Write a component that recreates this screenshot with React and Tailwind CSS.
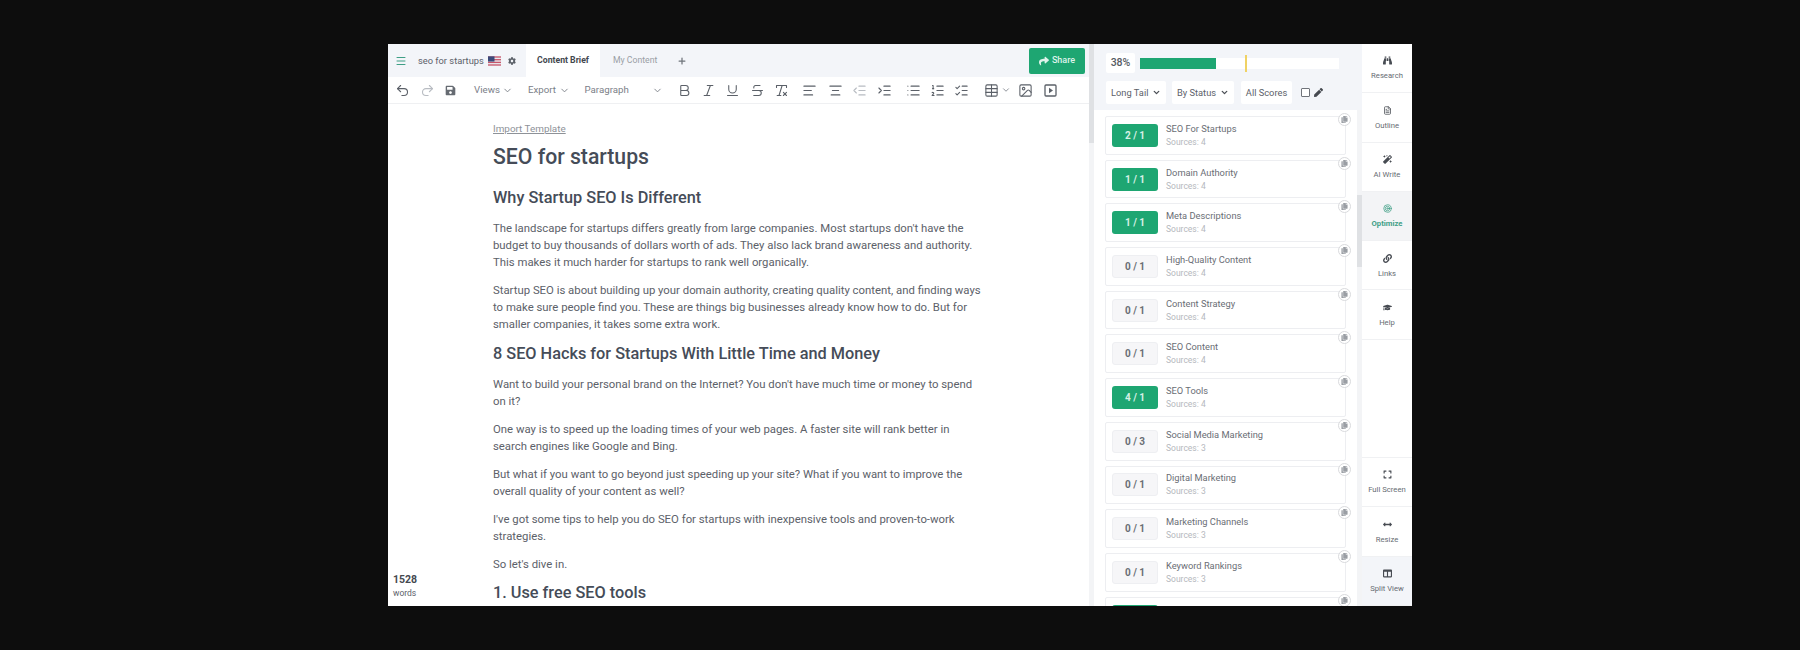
import React from 'react';
import {
  Undo2, Redo2, ChevronDown, Bold, Italic, Underline, Strikethrough, RemoveFormatting,
  AlignLeft, AlignCenter, IndentDecrease, IndentIncrease, List, ListOrdered, ListChecks,
  Table, Image, Menu, Plus, FileText, Target,
} from 'lucide-react';
import {
  FaBinoculars, FaCog, FaSave, FaShare, FaMagic, FaLink, FaGraduationCap, FaExpand,
  FaArrowsAltH, FaColumns, FaCopy, FaPen,
} from 'react-icons/fa';

const keywords = [
  { name: 'SEO For Startups', score: '2 / 1', sources: 4, done: true },
  { name: 'Domain Authority', score: '1 / 1', sources: 4, done: true },
  { name: 'Meta Descriptions', score: '1 / 1', sources: 4, done: true },
  { name: 'High-Quality Content', score: '0 / 1', sources: 4 },
  { name: 'Content Strategy', score: '0 / 1', sources: 4 },
  { name: 'SEO Content', score: '0 / 1', sources: 4 },
  { name: 'SEO Tools', score: '4 / 1', sources: 4, done: true },
  { name: 'Social Media Marketing', score: '0 / 3', sources: 3 },
  { name: 'Digital Marketing', score: '0 / 1', sources: 3 },
  { name: 'Marketing Channels', score: '0 / 1', sources: 3 },
  { name: 'Keyword Rankings', score: '0 / 1', sources: 3 },
];

const UsFlag = () => (
  <svg width="13" height="10" viewBox="0 0 14 10">
    <rect width="14" height="10" fill="#e9e9ee" />
    <rect y="0" width="14" height="1.4" fill="#c8566b" />
    <rect y="2.9" width="14" height="1.4" fill="#c8566b" />
    <rect y="5.8" width="14" height="1.4" fill="#c8566b" />
    <rect y="8.6" width="14" height="1.4" fill="#c8566b" />
    <rect width="7" height="5.6" fill="#3b4a7a" />
  </svg>
);

// video button in the toolbar, lucide's square-play has an outline triangle
const VideoIcon = ({ className }) => (
  <svg width="15" height="15" viewBox="0 0 15 15" className={className}>
    <rect x="2" y="2" width="11" height="11" rx="1" fill="none" stroke="#5b6068" strokeWidth="1.3" />
    <path d="M6 4.8 L10 7.5 L6 10.2 Z" fill="#5b6068" />
  </svg>
);

const ToolIcon = ({ icon: Icon, light, className = '' }) => (
  <Icon size={15} strokeWidth={1.7} className={`shrink-0 ${light ? 'text-[#b8bcc2]' : 'text-[#5b6068]'} ${className}`} />
);

const Toolbar = () => (
  <div className="flex h-[27px] items-center border-b border-[#eff0f2] pl-[7px] text-[9.7px] text-[#7b8088]">
    <ToolIcon icon={Undo2} />
    <ToolIcon icon={Redo2} light className="ml-[10px]" />
    <FaSave size={11} className="ml-[10px] text-[#666b72]" />
    <span className="ml-[18px] w-[26px]">Views</span>
    <ChevronDown size={11} className="ml-[2px]" />
    <span className="ml-[15px] w-[28px]">Export</span>
    <ChevronDown size={11} className="ml-[3px]" />
    <span className="ml-[14.5px] w-[45px]">Paragraph</span>
    <ChevronDown size={11} className="ml-[22px]" />
    <ToolIcon icon={Bold} className="ml-[14px]" />
    <ToolIcon icon={Italic} className="ml-[9px]" />
    <ToolIcon icon={Underline} className="ml-[9.5px]" />
    <ToolIcon icon={Strikethrough} className="ml-[9.5px]" />
    <ToolIcon icon={RemoveFormatting} className="ml-[9.5px]" />
    <ToolIcon icon={AlignLeft} className="ml-[13px]" />
    <ToolIcon icon={AlignCenter} className="ml-[10.5px]" />
    <ToolIcon icon={IndentDecrease} light className="ml-[9.5px]" />
    <ToolIcon icon={IndentIncrease} className="ml-[10px]" />
    <ToolIcon icon={List} className="ml-[14px]" />
    <ToolIcon icon={ListOrdered} className="ml-[9px]" />
    <ToolIcon icon={ListChecks} className="ml-[9px]" />
    <ToolIcon icon={Table} className="ml-[15px]" />
    <ChevronDown size={10} className="ml-[2px]" />
    <ToolIcon icon={Image} className="ml-[7px]" />
    <VideoIcon className="ml-[9.5px] shrink-0" />
  </div>
);

const TopBar = () => (
  <div className="flex h-[33px] items-center bg-[#f3f5f9] pl-[7px] pr-[4px]">
    <Menu size={12} className="text-[#3f9f86]" />
    <span className="ml-[11px] w-[65px] whitespace-nowrap text-[9.3px] text-[#5c6169]">seo for startups</span>
    <span className="ml-[5px]"><UsFlag /></span>
    <FaCog size={8} className="ml-[7px] text-[#5c6169]" />
    <div className="ml-[10px] flex h-full w-[74px] items-center justify-center bg-white text-[8.7px] font-bold text-[#43474e]">
      Content Brief
    </div>
    <span className="ml-[13px] w-[44px] whitespace-nowrap text-[8.7px] text-[#9a9ea5]">My Content</span>
    <Plus size={10} strokeWidth={3} className="ml-[20px] text-[#6f747b]" />
    <button className="ml-auto flex h-[26px] w-[56px] items-center justify-center gap-[3px] rounded-[2px] bg-[#1ea672] text-[9px] font-medium text-[#dff3ea]">
      <FaShare size={10} />
      Share
    </button>
  </div>
);

const Article = () => (
  <div className="h-[502px] overflow-hidden pl-[105px] pt-[16px] text-[11.35px] leading-[17px] text-[#5c6169]">
    <div className="w-[492px]">
      <a className="text-[9.9px] leading-[15px] text-[#8e9298] underline">Import Template</a>
      <h1 className="mt-[7px] text-[21.2px] leading-[26px] font-medium text-[#454c58]">SEO for startups</h1>
      <h2 className="mt-[17px] text-[16.3px] leading-[22px] font-medium text-[#454c58]">Why Startup SEO Is Different</h2>
      <p className="mt-[11px]">The landscape for startups differs greatly from large companies. Most startups don't have the budget to buy thousands of dollars worth of ads. They also lack brand awareness and authority. This makes it much harder for startups to rank well organically.</p>
      <p className="mt-[11px]">Startup SEO is about building up your domain authority, creating quality content, and finding ways to make sure people find you. These are things big businesses already know how to do. But for smaller companies, it takes some extra work.</p>
      <h2 className="mt-[10px] text-[16.3px] leading-[22px] font-medium text-[#454c58]">8 SEO Hacks for Startups With Little Time and Money</h2>
      <p className="mt-[11px]">Want to build your personal brand on the Internet? You don't have much time or money to spend on it?</p>
      <p className="mt-[11px]">One way is to speed up the loading times of your web pages. A faster site will rank better in search engines like Google and Bing.</p>
      <p className="mt-[11px]">But what if you want to go beyond just speeding up your site? What if you want to improve the overall quality of your content as well?</p>
      <p className="mt-[11px]">I've got some tips to help you do SEO for startups with inexpensive tools and proven-to-work strategies.</p>
      <p className="mt-[11px]">So let's dive in.</p>
      <h2 className="mt-[9px] text-[16.3px] leading-[22px] font-medium text-[#454c58]">1. Use free SEO tools</h2>
    </div>
  </div>
);

const Select = ({ label, width }) => (
  <div className={`flex h-[23px] items-center justify-between whitespace-nowrap rounded-[2px] bg-white px-[5px] text-[9.3px] text-[#5c6169] ${width}`}>
    {label}
    <ChevronDown size={9} strokeWidth={3.5} className="shrink-0 text-[#4a4e55]" />
  </div>
);

const ScorePanel = () => (
  <div className="h-[66px] bg-[#f3f5f9] pl-[12px] pt-[9px]">
    <div className="flex items-center">
      <div className="flex h-[20px] w-[29px] items-center justify-center rounded-[2px] bg-white text-[10.5px] font-medium text-[#555a62]">38%</div>
      <div className="relative ml-[5px] h-[11px] w-[199px] bg-white">
        <div className="h-full w-[76px] bg-[#1ea672]" />
        <div className="absolute left-[105px] top-[-3px] h-[17px] w-[2px] bg-[#f0d264]" />
      </div>
    </div>
    <div className="mt-[8px] flex items-center">
      <Select label="Long Tail" width="w-[60px]" />
      <div className="ml-[6px]"><Select label="By Status" width="w-[62px]" /></div>
      <div className="ml-[7px] flex h-[23px] w-[51px] items-center justify-center rounded-[2px] bg-white text-[9.3px] text-[#5c6169]">All Scores</div>
      <div className="ml-[9px] h-[9px] w-[9px] rounded-[1px] border border-[#70747b] bg-white" />
      <FaPen size={9} className="ml-[4px] text-[#454950]" />
    </div>
  </div>
);

const CopyBadge = () => (
  <div className="absolute -right-[6px] -top-[4px] flex h-[13px] w-[13px] items-center justify-center rounded-full border border-[#d9dadd] bg-white">
    <FaCopy size={7} className="text-[#9a9ea4]" />
  </div>
);

const KeywordCard = ({ name, score, sources, done }) => (
  <div className="relative mb-[5px] h-[38.7px] w-[241px] shrink-0 rounded-[2px] border border-[#edeef1] bg-white">
    <div className="flex h-full items-center pl-[6px]">
      <div className={`flex h-[23px] w-[46px] items-center justify-center rounded-[3px] text-[10px] font-bold ${done ? 'bg-[#1ea672] text-[#d7f0e6]' : 'border border-[#eeeff2] bg-[#f6f6f8] text-[#6a6e75]'}`}>
        {score}
      </div>
      <div className="ml-[8px] -mt-[1px]">
        <div className="text-[9.3px] leading-[14px] text-[#6a6e75]">{name}</div>
        <div className="text-[8.5px] leading-[12px] text-[#b5b8bd]">Sources: {sources}</div>
      </div>
    </div>
    <CopyBadge />
  </div>
);

const NavItem = ({ icon: Icon, label, active, tinted, size = 9 }) => (
  <div className={`flex h-[49.3px] flex-col items-center justify-center gap-[5px] border-b border-[#f0f1f3] pt-[2px] text-[7.7px] ${active ? 'bg-[#f3f4f6] font-bold text-[#3f9f86]' : tinted ? 'bg-[#f3f5f9] text-[#666b72]' : 'text-[#666b72]'}`}>
    <Icon size={size} className={active ? 'text-[#3f9f86]' : 'text-[#474b52]'} />
    {label}
  </div>
);

const SideNav = () => (
  <div className="flex w-[50px] flex-col bg-white">
    <NavItem icon={FaBinoculars} label="Research" />
    <NavItem icon={FileText} label="Outline" />
    <NavItem icon={FaMagic} label="AI Write" />
    <NavItem icon={Target} label="Optimize" active />
    <NavItem icon={FaLink} label="Links" />
    <NavItem icon={FaGraduationCap} label="Help" />
    <div className="flex-1 border-b border-[#f0f1f3]" />
    <NavItem icon={FaExpand} label="Full Screen" />
    <NavItem icon={FaArrowsAltH} label="Resize" />
    <NavItem icon={FaColumns} label="Split View" tinted />
  </div>
);

export default function App() {
  return (
    <div className="h-[650px] w-[1800px] bg-[#0d0d0d] pl-[388px] pt-[44px] font-['Roboto',sans-serif]">
      <div className="relative flex h-[562px] w-[1024px] overflow-hidden bg-white">
        <div className="w-[701px] shrink-0">
          <TopBar />
          <Toolbar />
          <Article />
          <div className="absolute bottom-[6px] left-[5px] text-[8.5px] leading-[13.5px] text-[#5c6169]">
            <div className="text-[10.5px] font-bold text-[#454950]">1528</div>
            words
          </div>
        </div>
        <div className="flex w-[5px] shrink-0 flex-col bg-[#f3f4f6]">
          <div className="h-[99px] bg-[#dfe1e4]" />
        </div>
        <div className="flex w-[268px] shrink-0 flex-col">
          <ScorePanel />
          <div className="flex flex-1 overflow-hidden">
            <div className="flex h-[496px] w-[263px] flex-col overflow-hidden pl-[11px] pt-[6px]">
              {keywords.map((k) => <KeywordCard key={k.name} {...k} />)}
              <div className="relative h-[38.7px] w-[241px] shrink-0 rounded-[2px] border border-[#edeef1] bg-white pl-[6px] pt-[7px]">
                <div className="h-[23px] w-[46px] rounded-[3px] bg-[#1ea672]" />
                <CopyBadge />
              </div>
            </div>
            <div className="w-[5px] bg-[#f3f4f6]">
              <div className="mt-[85px] h-[72px] bg-[#dfe1e4]" />
            </div>
          </div>
        </div>
        <SideNav />
      </div>
    </div>
  );
}
